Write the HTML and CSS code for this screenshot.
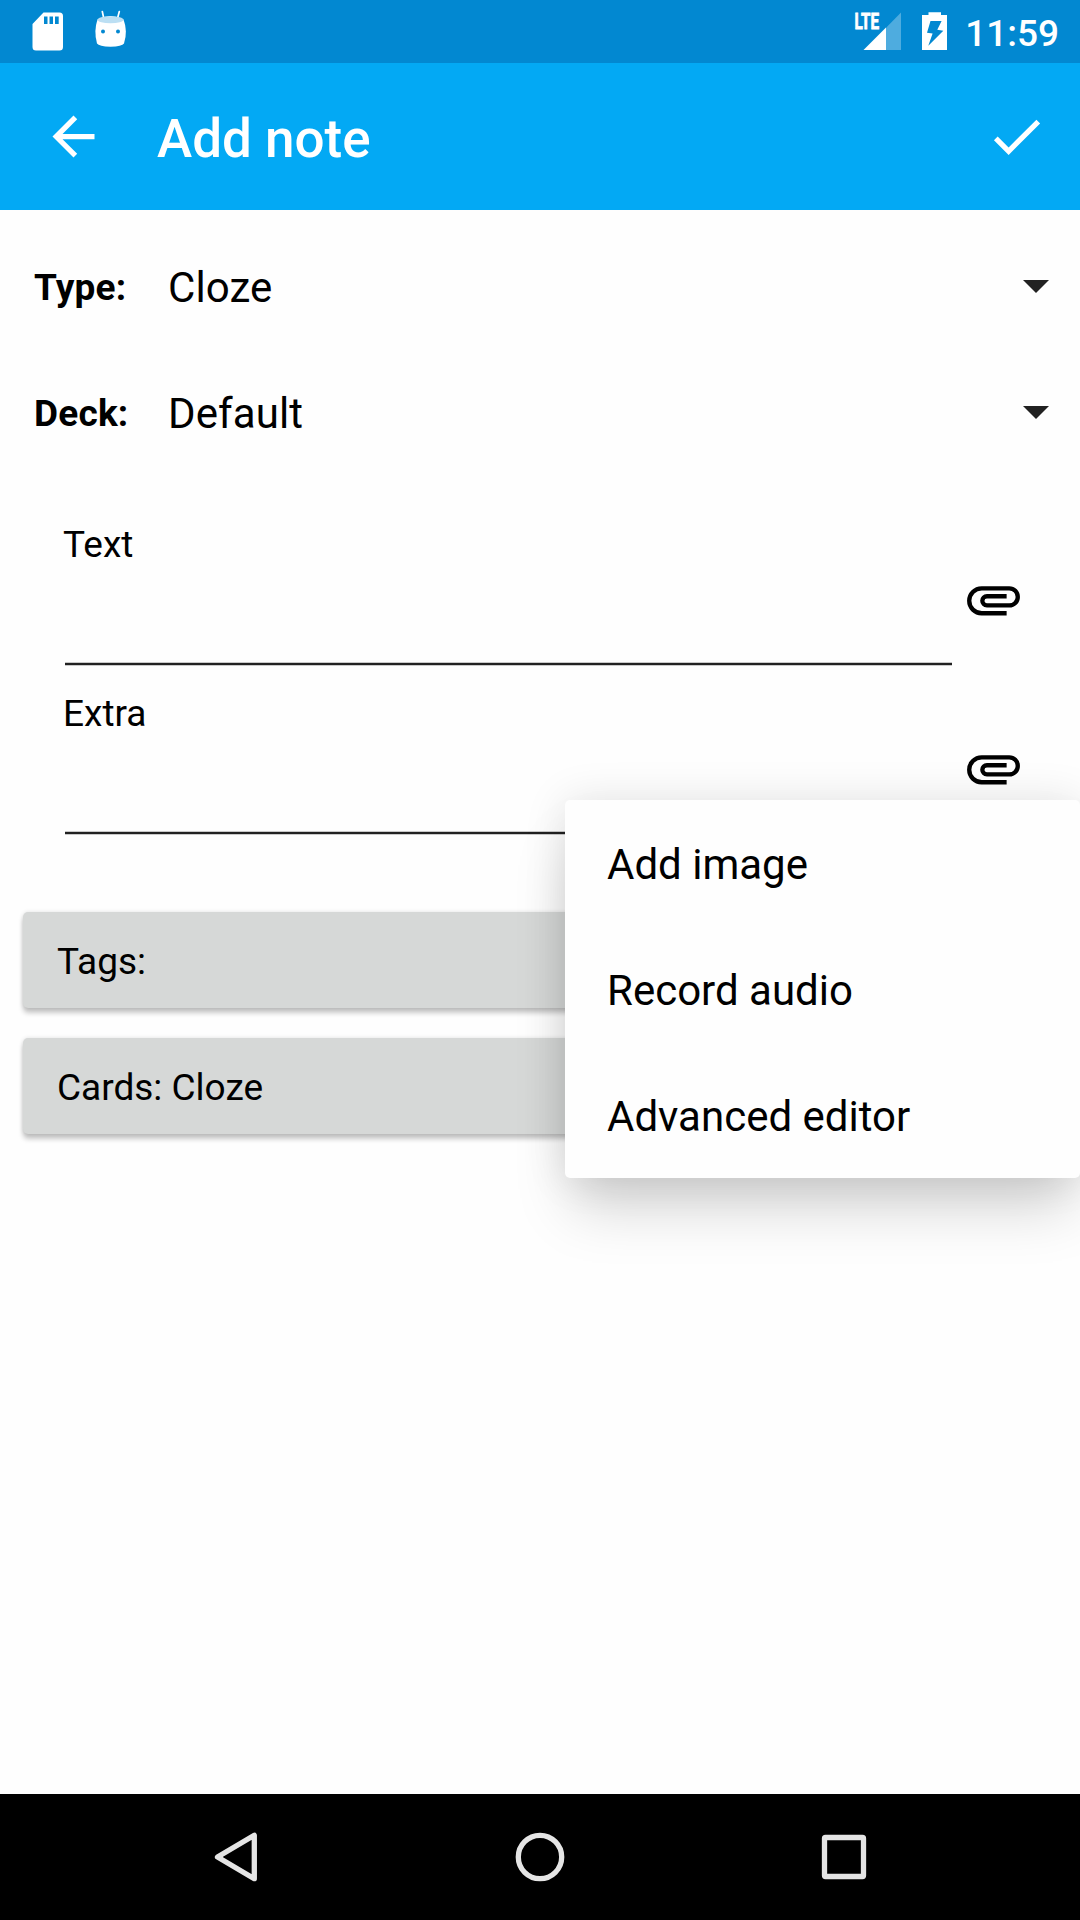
FILE: index.html
```html
<!DOCTYPE html>
<html lang="en">
<head>
<meta charset="utf-8">
<title>Add note</title>
<link rel="stylesheet" href="styles.css">
</head>
<body>
<div class="screen">
  <div class="status-bar">
    <svg class="status-icons" width="100" height="63" viewBox="30 0 100 63">
      <path fill="#fff" fill-rule="evenodd" d="M43.500 12.500H59.500a3.500 3.500 0 0 1 3.500 3.500V47a3.500 3.500 0 0 1-3.500 3.500H36a3.500 3.500 0 0 1-3.500-3.500V24zM44 16.500V24h3.500v-7.500zM49.500 16.500V24h3.500v-7.500zM55 16.500V24h3.700v-7.500z"/>
      <path stroke="#fff" stroke-width="1.700" stroke-linecap="round" d="M102.300 11.500l1.500 7M119.300 11.500l-1.800 7"/>
      <path fill="#fff" d="M97.500 19.500Q110.500 12.500 123.500 19.500Q128 31 124 43.500Q122 46.500 110.500 46.700Q99 46.500 97 43.500Q93.500 31 97.500 19.500z"/>
      <ellipse cx="110.500" cy="19.800" rx="13" ry="3.500" fill="#bcdff3"/>
      <circle cx="103" cy="31.500" r="2" fill="#0288d1"/>
      <circle cx="118" cy="31.500" r="2" fill="#0288d1"/>
    </svg>
    <div class="status-right">
      <svg width="96" height="63" viewBox="854 0 96 63">
        <path fill="#fff" fill-opacity=".3" d="M901 12.500V50H886V27.800z"/>
        <path fill="#fff" d="M886 27.500V50H863.500z"/>
        <text class="network" x="854.500" y="29" textLength="24.500" lengthAdjust="spacingAndGlyphs">LTE</text>
        <path fill="#fff" fill-rule="evenodd" d="M928.500 12.300h12.500V15h6v35h-25V15h6.500zM930.500 21l-3.500 11.700 5.600.8-4.300 12.200 15-15-6-.9 4.300-8.800z"/>
      </svg>
      <span class="clock">11:59</span>
    </div>
  </div>

  <header class="app-bar">
    <svg class="back" width="63" height="63" viewBox="0 0 24 24"><path fill="#fff" d="M20 11H7.830l5.590-5.590L12 4l-8 8 8 8 1.410-1.410L7.830 13H20v-2z"/></svg>
    <h1 class="title">Add note</h1>
    <svg class="confirm" width="63" height="63" viewBox="0 0 24 24"><path fill="#fff" d="M9 16.170L4.830 12l-1.420 1.410L9 19 21 7l-1.410-1.410z"/></svg>
  </header>

  <main class="content">
    <div class="select-row">
      <span class="select-label">Type:</span>
      <span class="select-value">Cloze</span>
      <svg width="26" height="13" viewBox="0 0 26 13"><path fill="#212121" d="M0 0h26L13 13z"/></svg>
    </div>
    <div class="select-row">
      <span class="select-label">Deck:</span>
      <span class="select-value">Default</span>
      <svg width="26" height="13" viewBox="0 0 26 13"><path fill="#212121" d="M0 0h26L13 13z"/></svg>
    </div>

    <div class="fields">
      <div class="field">
        <div class="field-main"><span class="field-label">Text</span><div class="underline"></div></div>
        <svg class="attach" width="63" height="63" viewBox="0 0 24 24"><path d="M17 17.250H7.500a4.750 4.750 0 0 1 0-9.500H18a3.250 3.250 0 0 1 0 6.500H9.500a1.750 1.750 0 0 1 0-3.500H17"/></svg>
      </div>
      <div class="field">
        <div class="field-main"><span class="field-label">Extra</span><div class="underline"></div></div>
        <svg class="attach" width="63" height="63" viewBox="0 0 24 24"><path d="M17 17.250H7.500a4.750 4.750 0 0 1 0-9.500H18a3.250 3.250 0 0 1 0 6.500H9.500a1.750 1.750 0 0 1 0-3.500H17"/></svg>
      </div>
    </div>

    <div class="actions">
      <div class="action">Tags:</div>
      <div class="action">Cards: Cloze</div>
    </div>
  </main>

  <nav class="nav-bar">
    <svg width="54" height="54" viewBox="0 0 54 54"><path d="M45.300 5.300v43.400L8.500 27z"/></svg>
    <svg width="54" height="54" viewBox="0 0 54 54"><circle cx="27" cy="27" r="21.700"/></svg>
    <svg width="54" height="54" viewBox="0 0 54 54"><rect x="7.500" y="7.500" width="39" height="39" rx="1"/></svg>
  </nav>

  <div class="menu">
    <div class="menu-item">Add image</div>
    <div class="menu-item">Record audio</div>
    <div class="menu-item">Advanced editor</div>
  </div>
</div>
</body>
</html>
```
FILE: styles.css
```css
* { box-sizing: border-box; }

body {
  margin: 0;
  font-family: Roboto, sans-serif;
  color: #000;
}

svg { display: block; flex: none; }

.screen {
  position: relative;
  display: flex;
  flex-direction: column;
  width: 1080px;
  height: 1920px;
  overflow: hidden;
  background: #fefefe;
}

.status-bar {
  display: flex;
  justify-content: space-between;
  height: 63px;
  padding: 0 21px 0 30px;
  background: #0288d1;
}

.status-right { display: flex; gap: 15px; }

.network {
  font-size: 21.5px;
  font-weight: 700;
  fill: #fff;
  stroke: #fff;
  stroke-width: .8;
}

.clock {
  color: #fff;
  font-size: 37px;
  font-weight: 500;
  line-height: 67px;
}

.app-bar {
  display: flex;
  align-items: center;
  height: 147px;
  padding: 0 32.5px 0 42px;
  background: #03a9f4;
}

.title {
  flex: 1;
  margin: 5px 0 0 52px;
  color: #fff;
  font-size: 53px;
  font-weight: 500;
  line-height: 64px;
}

.content { flex: 1; padding-top: 13px; }

.select-row {
  display: flex;
  align-items: center;
  height: 126px;
  padding: 0 31.5px 0 34px;
}

.select-label {
  width: 134px;
  padding-top: 4px;
  font-size: 37px;
  font-weight: 700;
  letter-spacing: .2px;
  line-height: 44px;
}

.select-value {
  flex: 1;
  padding-top: 4px;
  font-size: 42px;
  letter-spacing: .1px;
  line-height: 50px;
}

.fields { padding: 45px 55px 0 63px; }

.field {
  display: flex;
  justify-content: space-between;
  height: 169px;
}

.field-main {
  display: flex;
  flex-direction: column;
  justify-content: space-between;
  width: 889px;
  height: 146px;
}

.field-label {
  font-size: 37px;
  line-height: 50px;
}

.underline {
  height: 4px;
  margin-left: 2px;
  border: solid #c8c8c8;
  border-width: 1px 0;
  background: #212121;
}

.attach {
  margin-top: 48px;
  fill: none;
  stroke: #000;
  stroke-width: 1.65;
}

.actions {
  display: flex;
  flex-direction: column;
  gap: 30px;
  padding: 54px 23px 0;
}

.action {
  height: 96px;
  padding-left: 34px;
  border-radius: 5px;
  background: #d6d8d7;
  box-shadow: 0 5px 5px rgba(0, 0, 0, .22), 0 0 4px rgba(0, 0, 0, .12);
  font-size: 37px;
  line-height: 100px;
}

.nav-bar {
  display: flex;
  justify-content: space-between;
  align-items: center;
  height: 126px;
  padding: 0 209px;
  background: #000;
}

.nav-bar svg {
  fill: none;
  stroke: #e5e5e5;
  stroke-width: 5.3;
  stroke-linejoin: round;
}

.menu {
  position: absolute;
  top: 800px;
  right: 0;
  width: 515px;
  height: 378px;
  border-radius: 5px;
  background: #fefefe;
  box-shadow: 0 38px 54px -8px rgba(0, 0, 0, .17), 0 0 44px rgba(0, 0, 0, .11);
}

.menu-item {
  height: 126px;
  padding-left: 42px;
  font-size: 42px;
  line-height: 129px;
}
```
